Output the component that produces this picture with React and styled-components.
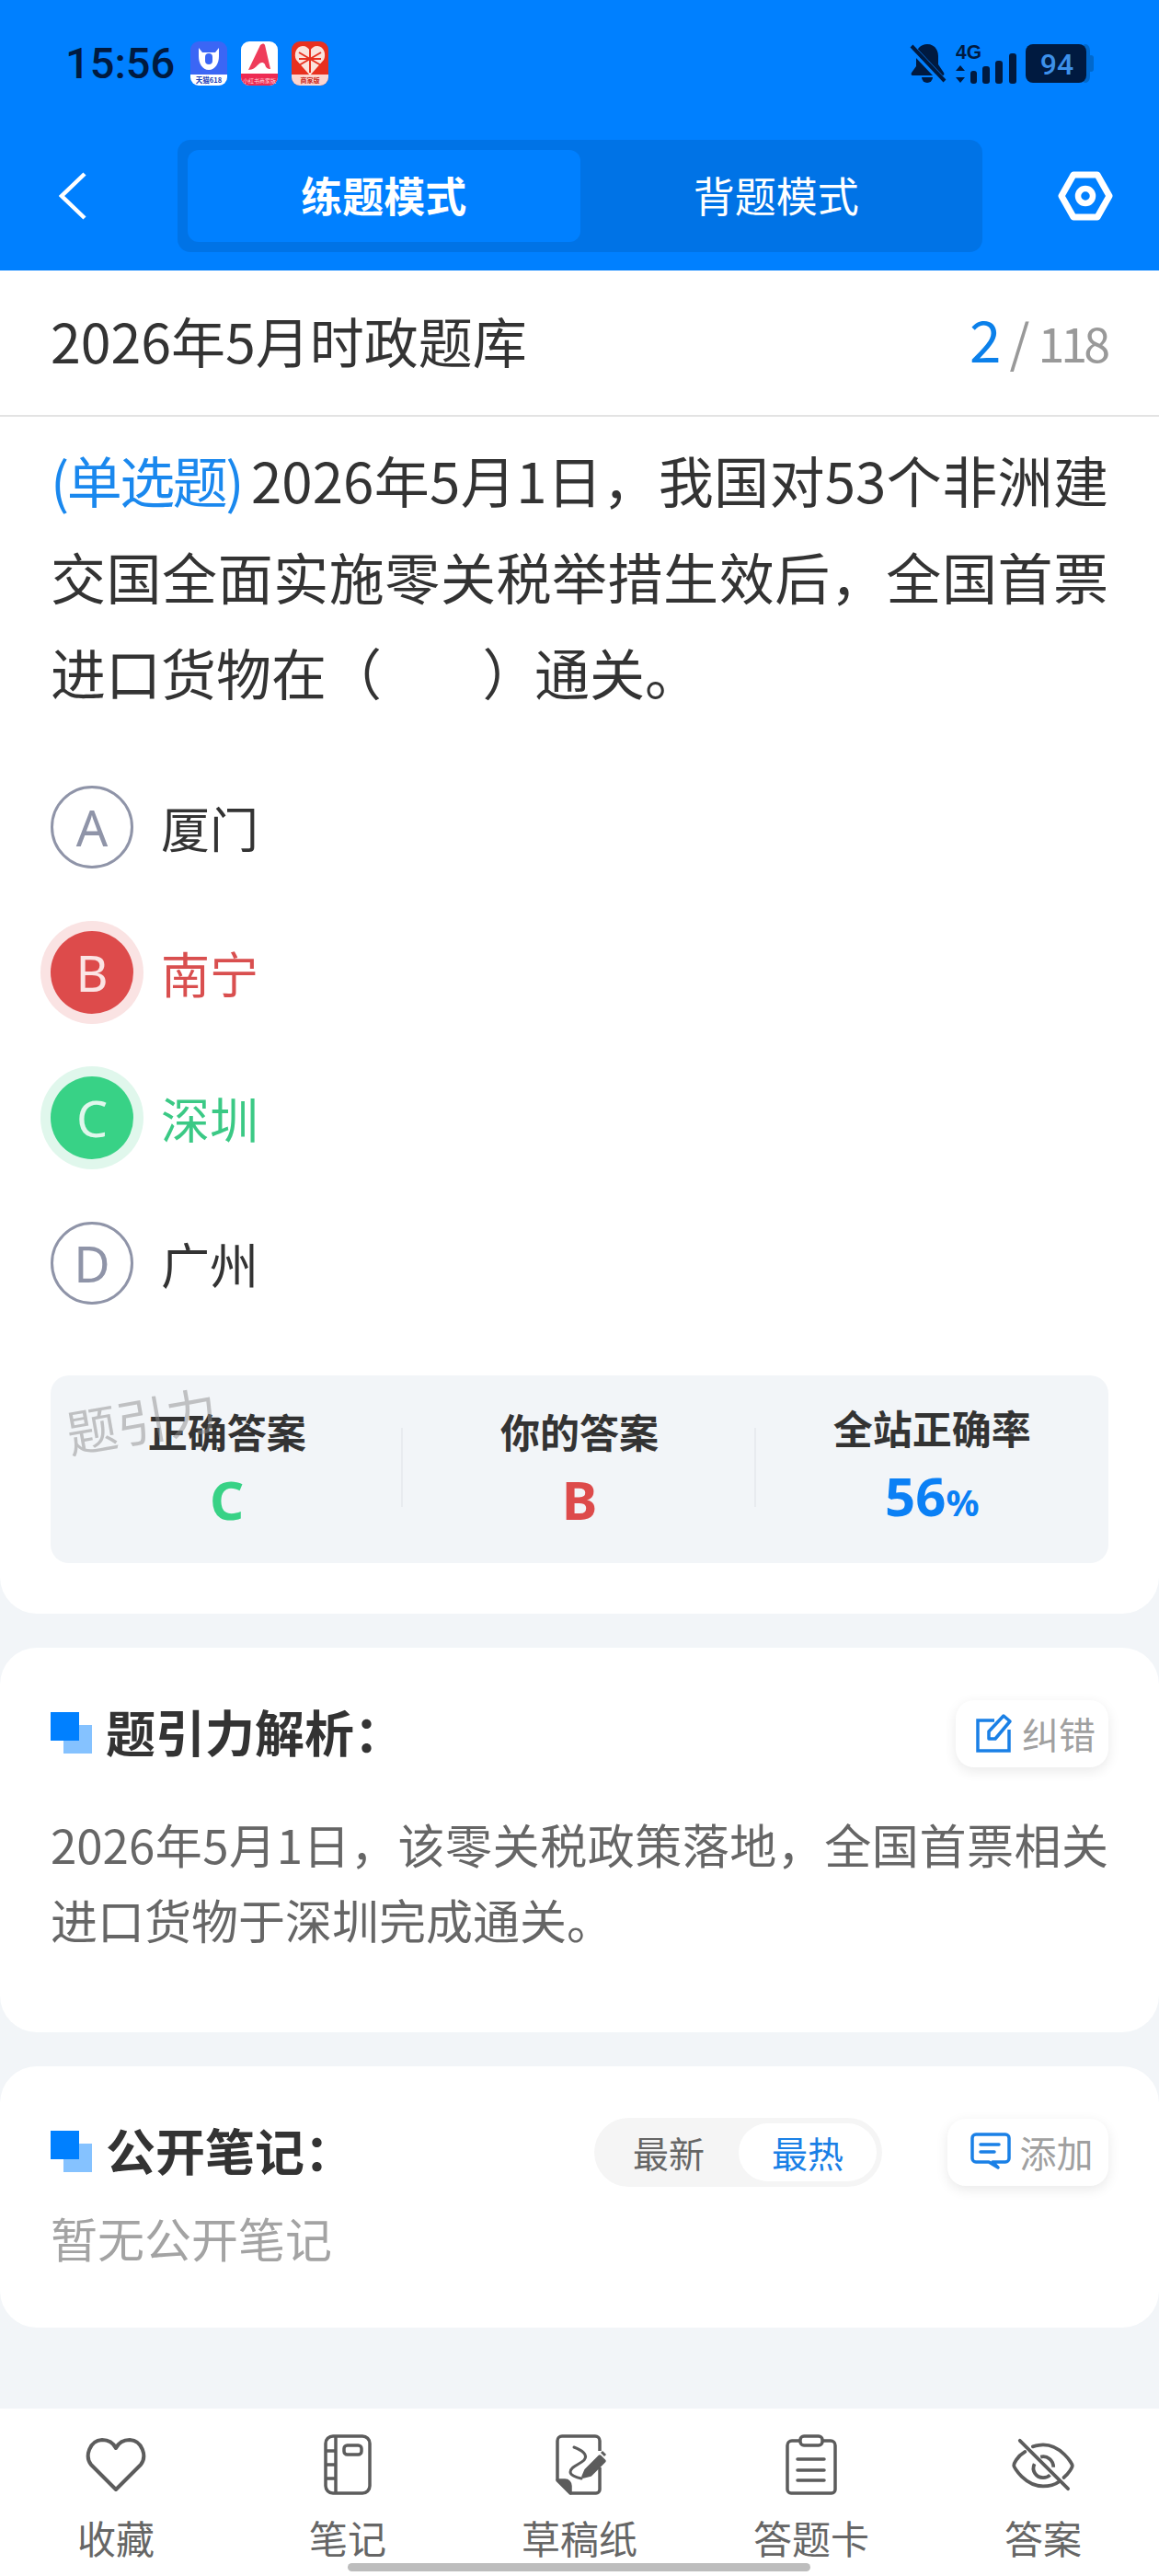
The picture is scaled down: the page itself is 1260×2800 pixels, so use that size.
import styled, { createGlobalStyle } from "styled-components";

const GlobalStyle = createGlobalStyle`
    * { box-sizing: border-box; }
    html, body { margin: 0; padding: 0; background: #f2f5f8; }
    body { font-family: "Noto Sans CJK SC", "Noto Sans", sans-serif; }
`;

//==========================================================================
//  *** Styled components   ***

const Page = styled.div`
    position: relative;
    width: 1260px;
    height: 2800px;
    display: flex;
    flex-direction: column;
    background: #f2f5f8;
    overflow: hidden;
`;

const Header = styled.header`
    height: 294px;
    background: #0080ff;
    padding-top: 48px;
`;

const StatusBar = styled.div`
    height: 42px;
    padding: 0 71px;
    display: flex;
    justify-content: space-between;
    align-items: center;
`;

const StatusLeft = styled.div`
    display: flex;
    align-items: center;
`;

const Clock = styled.span`
    font-family: "Roboto", sans-serif;
    font-size: 47px;
    line-height: 42px;
    font-weight: 500;
    color: #001a40;
    width: 136px;
`;

const AppIcons = styled.div`
    display: flex;
    gap: 15px;
`;

const StatusRight = styled.div`
    display: flex;
    align-items: center;
    gap: 10px;
`;

const NavRow = styled.div`
    margin-top: 62px;
    height: 122px;
    padding-left: 64px;
    display: flex;
    align-items: center;
`;

const Segment = styled.div`
    width: 875px;
    height: 122px;
    margin: 0 82px 0 99px;
    padding: 11px;
    border-radius: 14px;
    background: #0073e6;
    display: grid;
    grid-template-columns: 1fr 1fr;
`;

const SegmentItem = styled.div`
    border-radius: 12px;
    padding-bottom: 3px;
    display: flex;
    align-items: center;
    justify-content: center;
    color: #fff;
    font-size: 45px;
    font-weight: ${(p) => (p.$active ? 700 : 400)};
    background: ${(p) => (p.$active ? "#0080ff" : "transparent")};
`;

const QuestionCard = styled.section`
    height: 1460px;
    background: #fff;
    border-radius: 0 0 40px 40px;
`;

const TitleRow = styled.div`
    height: 159px;
    padding: 0 55px 6px;
    border-bottom: 2px solid #e3e3e3;
    display: flex;
    align-items: center;
    justify-content: space-between;
`;

const BankTitle = styled.h1`
    margin: 0;
    font-size: 59px;
    font-weight: 400;
    color: #333;
`;

const Counter = styled.div`
    display: flex;
    align-items: baseline;
    padding: 0 2px 5px 0;
    color: #999;
    font-size: 52px;
    letter-spacing: -4px;
`;

const CounterNow = styled.span`
    font-size: 62px;
    letter-spacing: 0;
    color: #0b80ea;
    margin-right: 9px;
`;

const CounterSlash = styled.span`
    font-size: 56px;
    letter-spacing: 0;
    margin-right: 9px;
`;

const QuestionText = styled.div`
    padding: 16px 55px 0;
    font-size: 60px;
    line-height: 104.5px;
    color: #333;
`;

// Each line of the stem is its own block, the reference breaks them at fixed places
const QuestionLine = styled.div`
    display: flex;
    justify-content: ${(p) => (p.$last ? "flex-start" : "space-between")};
    white-space: nowrap;
`;

const JustifiedRun = styled.span`
    flex: 1;
    text-align: justify;
    text-align-last: justify;
`;

const QuestionType = styled.span`
    color: #1a88ee;
    letter-spacing: -2.5px;
    margin-right: 10px;
`;

const Blank = styled.span`
    letter-spacing: -3.5px;
`;

const Options = styled.div`
    margin-top: 71px;
    padding: 0 55px;
    display: flex;
    flex-direction: column;
    gap: 68px;
`;

const OptionRow = styled.div`
    display: flex;
    align-items: center;
    gap: 30px;
    height: 90px;
    font-size: 53px;
    color: ${(p) => (p.$state === "wrong" ? "#d94f4f" : p.$state === "right" ? "#3bc985" : "#333")};
`;

const OptionBadge = styled.div`
    width: 90px;
    height: 90px;
    border-radius: 50%;
    display: flex;
    align-items: center;
    justify-content: center;
    font-family: "Noto Sans", sans-serif;
    font-size: 54px;
    font-weight: 400;
    ${(p) =>
        p.$state === "wrong"
            ? "background:#dd4b4b;color:#fbe4e4;box-shadow:0 0 0 11px #fae3e3;"
            : p.$state === "right"
              ? "background:#38d286;color:#e0f7ec;box-shadow:0 0 0 11px #e0f7ec;"
              : "border:3px solid #8f94a8;color:#8f94a8;"}
`;

const StatBox = styled.div`
    position: relative;
    margin: 77px 55px 0;
    height: 204px;
    border-radius: 20px;
    background: #f2f5f8;
    display: grid;
    grid-template-columns: repeat(3, 1fr);
    align-items: center;
`;

const Stat = styled.div`
    position: relative;
    height: 90px;
    display: flex;
    flex-direction: column;
    align-items: center;
    justify-content: center;

    &::before {
        content: "";
        display: ${(p) => (p.$divided ? "block" : "none")};
        position: absolute;
        left: -2px;
        top: 0;
        width: 2px;
        height: 86px;
        background: #e8ebef;
    }
`;

const StatLabel = styled.div`
    font-size: 43px;
    line-height: 60px;
    font-weight: 700;
    color: #333;
    margin-top: -38px;
`;

const StatValue = styled.div`
    font-family: "Noto Sans", sans-serif;
    font-size: 58px;
    line-height: 68px;
    margin-top: 11px;
    margin-bottom: -33px;
    font-weight: 700;
    color: ${(p) => p.$color};
`;

const Percent = styled.span`
    font-size: 40px;
`;

const Watermark = styled.div`
    position: absolute;
    left: 16px;
    top: 7px;
    font-size: 55px;
    color: rgba(140, 140, 140, 0.5);
    transform: rotate(-10deg);
    pointer-events: none;
`;

const Card = styled.section`
    margin-top: ${(p) => p.$top}px;
    height: ${(p) => p.$height}px;
    background: #fff;
    border-radius: 40px;
    padding: 56px 55px 0;
`;

const SectionHead = styled.div`
    height: 74px;
    display: flex;
    align-items: center;
    justify-content: space-between;
`;

const HeadTitle = styled.div`
    display: flex;
    align-items: center;
    gap: 15px;
    padding-bottom: 6px;
    font-size: 54px;
    font-weight: 700;
    color: #333;
`;

const TitleMark = styled.span`
    position: relative;
    display: block;
    width: 45px;
    height: 45px;
    margin-top: 4px;

    &::before, &::after {
        content: "";
        position: absolute;
        width: 31px;
        height: 31px;
    }
    &::after { left: 0; top: 0; background: #0080ff; }
    &::before { right: 0; bottom: 0; background: #85c2ff; }
`;

const ActionButton = styled.div`
    height: 73px;
    width: ${(p) => p.$width}px;
    padding-left: 8px;
    display: flex;
    align-items: center;
    justify-content: center;
    gap: 10px;
    background: #fff;
    border-radius: 20px;
    box-shadow: 0 4px 14px rgba(0, 0, 0, 0.09);
    font-size: 40px;
    color: #a0a0a0;
`;

const HeadRight = styled.div`
    display: flex;
    align-items: center;
    gap: 71px;
`;

const SortPill = styled.div`
    width: 313px;
    height: 75px;
    padding: 6px;
    border-radius: 38px;
    background: #f5f5f5;
    display: flex;
    justify-content: space-between;
    align-items: stretch;
`;

const SortItem = styled.div`
    width: 150px;
    border-radius: 32px;
    display: flex;
    align-items: center;
    justify-content: center;
    font-size: 39px;
    color: ${(p) => (p.$active ? "#1a80e6" : "#666")};
    background: ${(p) => (p.$active ? "#fff" : "transparent")};
`;

const Analysis = styled.p`
    margin: 42px 0 0;
    font-size: 51px;
    line-height: 82px;
    color: #666;
    text-align: justify;
`;

const EmptyNote = styled.p`
    margin: 19px 0 0;
    font-size: 51px;
    line-height: 74px;
    color: #a3a3a3;
`;

const BottomBar = styled.nav`
    margin-top: auto;
    height: 182px;
    background: #fff;
    display: grid;
    grid-template-columns: repeat(5, 252px);
`;

const BarItem = styled.div`
    display: flex;
    flex-direction: column;
    align-items: center;
    padding-top: 26px;
    color: #5c5c5c;
`;

const BarIcon = styled.div`
    height: 70px;
    display: flex;
    align-items: center;
    justify-content: center;
`;

const BarLabel = styled.span`
    margin-top: 15px;
    font-size: 42px;
    line-height: 58px;
    color: #666;
`;

const HomeIndicator = styled.div`
    position: absolute;
    left: 378px;
    bottom: 5px;
    width: 503px;
    height: 9px;
    border-radius: 5px;
    background: #bdbdbd;
`;

//==========================================================================
//  *** Icons ***

const TmallIcon = () => (
    <svg width="40" height="48" viewBox="0 0 40 48">
        <rect width="40" height="48" rx="9" fill="#3b66f5" />
        <path d="M0 36h40v3a9 9 0 0 1-9 9H9a9 9 0 0 1-9-9z" fill="#fff" />
        <path d="M9 7l4 5h14l4-5v9c0 8-4 15-11 15S9 24 9 16z" fill="#fff" />
        <rect x="16" y="13" width="8" height="12" rx="4" fill="#3b66f5" />
        <text x="20" y="45" fontSize="7.5" textAnchor="middle" fill="#1c3fb8" fontWeight="700">天猫618</text>
    </svg>
);

const RedBookIcon = () => (
    <svg width="40" height="48" viewBox="0 0 40 48">
        <rect width="40" height="48" rx="9" fill="#fff" />
        <path d="M0 35h40v4a9 9 0 0 1-9 9H9a9 9 0 0 1-9-9z" fill="#ee2b52" />
        <path d="M8 31L21 4c2-2 4-2 5 0l6 26c-3 0-5-1-6-5-2-3-5-2-7 0-3 3-6 6-11 6z" fill="#ef3c5a" />
        <text x="20" y="45" fontSize="6" textAnchor="middle" fill="#ffd9df">小红书商家版</text>
    </svg>
);

const PddIcon = () => (
    <svg width="40" height="48" viewBox="0 0 40 48">
        <rect width="40" height="48" rx="9" fill="#e8301f" />
        <path d="M0 36h40v3a9 9 0 0 1-9 9H9a9 9 0 0 1-9-9z" fill="#fbd5cf" />
        <path d="M20 37L5 20C2 14 5 5 12 5c4 0 6 2 8 5 2-3 4-5 8-5 7 0 10 9 7 15z" fill="#fbe3dc" />
        <path d="M8 12l24 14M32 12L8 26M20 8v26M8 19h24" stroke="#e8301f" strokeWidth="2" />
        <text x="20" y="45" fontSize="7" textAnchor="middle" fill="#c9261a" fontWeight="700">商家版</text>
    </svg>
);

const BellOff = () => (
    <svg width="40" height="44" viewBox="0 0 40 44">
        <path d="M19 1c7 0 12 5 12 13v9l6 9c1 2 0 3-2 3H4c-2 0-3-1-2-3l5-7V14C7 6 12 1 19 1z" fill="#001a40" />
        <path d="M13 37h12a6 6 0 0 1-12 0z" fill="#001a40" />
        <path d="M1 4l36 38" stroke="#0080ff" strokeWidth="8" />
        <path d="M2 3l36 38" stroke="#001a40" strokeWidth="4" />
    </svg>
);

const Signal = () => (
    <svg width="66" height="52" viewBox="0 -4 66 52">
        <text x="0" y="17" fontFamily="Liberation Sans" fontSize="22" fontWeight="700" fill="#001a40" textLength="28" lengthAdjust="spacingAndGlyphs">4G</text>
        <path d="M5 24l5 6H0zM5 43l5-6H0z" fill="#001a40" />
        <rect x="16" y="30" width="7" height="14" rx="3" fill="#001a40" />
        <rect x="29" y="25" width="8" height="19" rx="3" fill="#001a40" />
        <rect x="43" y="19" width="8" height="25" rx="3" fill="#001a40" />
        <rect x="58" y="11" width="8" height="33" rx="3" fill="#001a40" />
    </svg>
);

const Battery = () => (
    <svg width="74" height="42" viewBox="0 0 74 42">
        <rect x="60" y="0" width="10" height="42" rx="7" fill="#0068cc" />
        <rect x="68" y="12" width="6" height="18" rx="3" fill="#0068cc" />
        <rect width="66" height="42" rx="8" fill="#001a40" />
        <text x="34" y="33" fontFamily="Roboto" fontSize="32" fontWeight="500" textAnchor="middle" fill="#3d90ea">94</text>
    </svg>
);

const BackIcon = () => (
    <svg width="30" height="52" viewBox="0 0 30 52" fill="none" stroke="#fff" strokeWidth="4.5">
        <path d="M28 2L3 26l25 24" />
    </svg>
);

const SettingsIcon = () => (
    <svg width="60" height="54" viewBox="0 0 60 54" fill="none" stroke="#fff" strokeWidth="7" strokeLinejoin="round">
        <path d="M17 4h26l13 23-13 23H17L4 27z" />
        <circle cx="30" cy="27" r="8" strokeWidth="6.5" />
    </svg>
);

const EditIcon = () => (
    <svg width="40" height="44" viewBox="0 0 40 44" fill="none" stroke="#1a80e6" strokeWidth="3.5">
        <path d="M20 8H2v33h34V18" />
        <path d="M14 28V20L30 3l7 6-16 19z" strokeLinejoin="round" />
    </svg>
);

const CommentIcon = () => (
    <svg width="44" height="42" viewBox="0 0 44 42" fill="none" stroke="#1a80e6" strokeWidth="3.5" strokeLinejoin="round">
        <path d="M6 2h32a4 4 0 0 1 4 4v22a4 4 0 0 1-4 4H24l6 6-10-6H6a4 4 0 0 1-4-4V6a4 4 0 0 1 4-4z" />
        <path d="M11 13h20M11 21h15" strokeLinecap="round" />
    </svg>
);

const HeartIcon = () => (
    <svg width="66" height="60" viewBox="0 0 66 60" fill="none" stroke="currentColor" strokeWidth="4">
        <path d="M33 57L6 30C-1 21 4 4 18 3c7 0 12 3 15 9 3-6 8-9 15-9 14 1 19 18 12 27z" strokeLinejoin="round" />
    </svg>
);

const NotebookIcon = () => (
    <svg width="52" height="66" viewBox="0 0 52 66" fill="none" stroke="currentColor" strokeWidth="3.5">
        <rect x="2" y="2" width="48" height="62" rx="8" />
        <path d="M13 2v62M2 18h11M2 33h11M2 48h11" />
        <rect x="22" y="12" width="19" height="10" rx="3.5" />
    </svg>
);

const DraftIcon = () => (
    <svg width="64" height="66" viewBox="-6 0 64 66" fill="none" stroke="currentColor" strokeWidth="3.5" strokeLinejoin="round">
        <path d="M2 50V7a5 5 0 0 1 5-5h36a5 5 0 0 1 5 5v11M48 36v24a4 4 0 0 1-4 4H16" />
        <path d="M2 50h8c4 0 6 3 6 6v8z" fill="currentColor" />
        <path d="M20 14c8 3 16 8 11 14-5 5-15 7-15 13 0 3 6 6 12 7" strokeWidth="3" strokeLinecap="round" />
        <path d="M30 46l3-7 15-15 5 5-15 15z" fill="currentColor" />
        <path d="M50 19l4 4" strokeWidth="3" />
    </svg>
);

const ClipboardIcon = () => (
    <svg width="56" height="66" viewBox="0 0 56 66" fill="none" stroke="currentColor" strokeWidth="3.5" strokeLinejoin="round">
        <path d="M15 7H7a5 5 0 0 0-5 5v48a4 4 0 0 0 4 4h44a4 4 0 0 0 4-4V12a5 5 0 0 0-5-5h-8" />
        <rect x="16" y="2" width="24" height="10" rx="4" />
        <path d="M13 27h29M13 39h29M13 50h29" strokeLinecap="round" />
    </svg>
);

const EyeOffIcon = () => (
    <svg width="68" height="58" viewBox="0 0 72 62" fill="none" stroke="currentColor" strokeWidth="4">
        <path d="M15 16C5 22 2 30 2 32s13 24 34 24c8 0 14-2 18-5M24 10c4-1 8-2 12-2 21 0 34 22 34 24 0 2-4 9-10 14" strokeLinecap="round" />
        <path d="M26 30c-4 8 2 16 10 16 3 0 6-1 8-3M33 22c8-2 15 4 15 12" strokeWidth="4" />
        <path d="M9 3l56 56" strokeLinecap="round" />
    </svg>
);

//==========================================================================

const OPTIONS = [
    { key: "A", text: "厦门" },
    { key: "B", text: "南宁", state: "wrong" },
    { key: "C", text: "深圳", state: "right" },
    { key: "D", text: "广州" },
];

const TABS = [
    { label: "收藏", Icon: HeartIcon },
    { label: "笔记", Icon: NotebookIcon },
    { label: "草稿纸", Icon: DraftIcon },
    { label: "答题卡", Icon: ClipboardIcon },
    { label: "答案", Icon: EyeOffIcon },
];

function App() {
    return (
        <Page>
            <GlobalStyle />
            <Header>
                <StatusBar>
                    <StatusLeft>
                        <Clock>15:56</Clock>
                        <AppIcons>
                            <TmallIcon />
                            <RedBookIcon />
                            <PddIcon />
                        </AppIcons>
                    </StatusLeft>
                    <StatusRight>
                        <BellOff />
                        <Signal />
                        <Battery />
                    </StatusRight>
                </StatusBar>
                <NavRow>
                    <BackIcon />
                    <Segment>
                        <SegmentItem $active>练题模式</SegmentItem>
                        <SegmentItem>背题模式</SegmentItem>
                    </Segment>
                    <SettingsIcon />
                </NavRow>
            </Header>

            <QuestionCard>
                <TitleRow>
                    <BankTitle>2026年5月时政题库</BankTitle>
                    <Counter>
                        <CounterNow>2</CounterNow>
                        <CounterSlash>/</CounterSlash>
                        118
                    </Counter>
                </TitleRow>
                <QuestionText>
                    <QuestionLine>
                        <QuestionType>(单选题)</QuestionType>
                        <JustifiedRun>2026年5月1日，我国对53个非洲建</JustifiedRun>
                    </QuestionLine>
                    <QuestionLine>
                        <JustifiedRun>交国全面实施零关税举措生效后，全国首票</JustifiedRun>
                    </QuestionLine>
                    <QuestionLine $last>
                        <span>进口货物在</span>
                        <Blank>（　　）</Blank>
                        <span>通关。</span>
                    </QuestionLine>
                </QuestionText>
                <Options>
                    {OPTIONS.map((o) => (
                        <OptionRow key={o.key} $state={o.state}>
                            <OptionBadge $state={o.state}>{o.key}</OptionBadge>
                            {o.text}
                        </OptionRow>
                    ))}
                </Options>
                <StatBox>
                    <Stat>
                        <StatLabel>正确答案</StatLabel>
                        <StatValue $color="#38d286">C</StatValue>
                    </Stat>
                    <Stat $divided>
                        <StatLabel>你的答案</StatLabel>
                        <StatValue $color="#dd4b4b">B</StatValue>
                    </Stat>
                    <Stat $divided>
                        <StatLabel>全站正确率</StatLabel>
                        <StatValue $color="#0b80f5">56<Percent>%</Percent></StatValue>
                    </Stat>
                    <Watermark>题引力</Watermark>
                </StatBox>
            </QuestionCard>

            <Card $top={37} $height={418}>
                <SectionHead>
                    <HeadTitle><TitleMark />题引力解析：</HeadTitle>
                    <ActionButton $width={166}><EditIcon />纠错</ActionButton>
                </SectionHead>
                <Analysis>2026年5月1日，该零关税政策落地，全国首票相关进口货物于深圳完成通关。</Analysis>
            </Card>

            <Card $top={37} $height={284}>
                <SectionHead>
                    <HeadTitle><TitleMark />公开笔记：</HeadTitle>
                    <HeadRight>
                        <SortPill>
                            <SortItem>最新</SortItem>
                            <SortItem $active>最热</SortItem>
                        </SortPill>
                        <ActionButton $width={175}><CommentIcon />添加</ActionButton>
                    </HeadRight>
                </SectionHead>
                <EmptyNote>暂无公开笔记</EmptyNote>
            </Card>

            <BottomBar>
                {TABS.map(({ label, Icon }) => (
                    <BarItem key={label}>
                        <BarIcon><Icon /></BarIcon>
                        <BarLabel>{label}</BarLabel>
                    </BarItem>
                ))}
            </BottomBar>
            <HomeIndicator />
        </Page>
    );
}

export default App;
